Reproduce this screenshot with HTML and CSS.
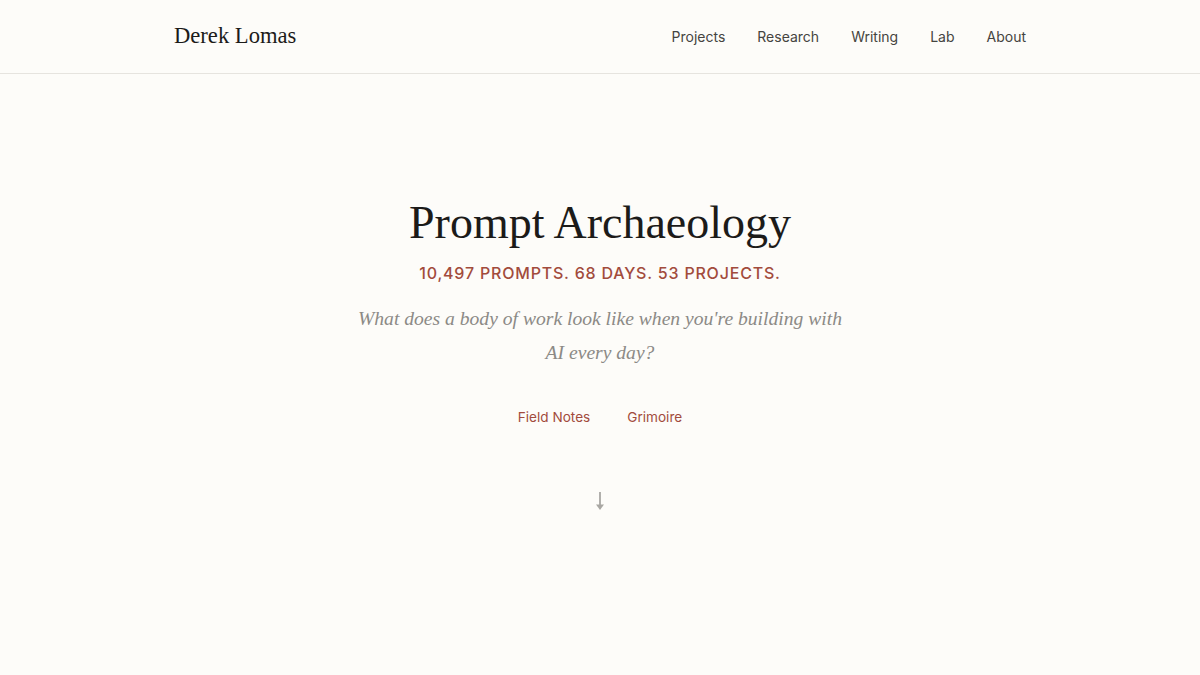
FILE: index.html
```html
<!DOCTYPE html>
<html lang="en">
<head>
<meta charset="utf-8">
<title>Prompt Archaeology — Derek Lomas</title>
<link rel="stylesheet" href="styles.css">
</head>
<body>
<header class="site-header">
  <div class="header-inner">
    <a class="brand" href="#">Derek Lomas</a>
    <nav class="nav">
      <a href="#">Projects</a>
      <a href="#">Research</a>
      <a href="#">Writing</a>
      <a href="#">Lab</a>
      <a href="#">About</a>
    </nav>
  </div>
</header>
<main class="hero">
  <h1 class="title">Prompt Archaeology</h1>
  <p class="stats">10,497 prompts. 68 days. 53 projects.</p>
  <p class="lede">What does a body of work look like when you're building with AI every day?</p>
  <div class="links">
    <a href="#">Field Notes</a>
    <a href="#">Grimoire</a>
  </div>
  <div class="arrow">
    <svg width="12" height="20" viewBox="0 0 12 20" aria-hidden="true">
      <line x1="6" y1="1" x2="6" y2="15" stroke="#a9a7a3" stroke-width="1.8"/>
      <path d="M2 13.5 L6 19 L10 13.5 Z" fill="#a9a7a3"/>
    </svg>
  </div>
</main>
</body>
</html>
```
FILE: styles.css
```css
* { box-sizing: border-box; }
html, body { margin: 0; padding: 0; }
body {
  background: #fdfcf9;
  color: #1c1b19;
  font-family: Inter, "Noto Sans", sans-serif;
  height: 675px;
  overflow: hidden;
}
a { text-decoration: none; color: inherit; }

.site-header {
  height: 74px;
  border-bottom: 1px solid #e6e4df;
}
.header-inner {
  max-width: 900px;
  margin: 0 auto;
  padding: 0 24px;
  height: 73px;
  display: flex;
  align-items: center;
  justify-content: space-between;
}
.brand {
  font-family: "Liberation Serif", "DejaVu Serif", serif;
  font-size: 22.6px;
  color: #1c1b19;
  position: relative;
  top: -1px;
}
.nav {
  display: flex;
  gap: 32px;
}
.nav a {
  font-size: 14px;
  color: #454440;
}

.hero {
  display: flex;
  flex-direction: column;
  align-items: center;
  text-align: center;
  padding-top: 121px;
}
.title {
  margin: 0;
  font-family: "Liberation Serif", "DejaVu Serif", serif;
  font-weight: 400;
  font-size: 46px;
  line-height: 56px;
  color: #1c1b19;
}
.stats {
  margin: 12px 0 0;
  font-size: 16px;
  font-weight: 500;
  letter-spacing: 0.8px;
  text-transform: uppercase;
  color: #a24b3c;
  line-height: 20px;
}
.lede {
  margin: 19px 0 0;
  max-width: 500px;
  font-family: "Liberation Serif", "DejaVu Serif", serif;
  font-style: italic;
  font-size: 19.6px;
  line-height: 34px;
  color: #8c8a86;
}
.links {
  margin-top: 39px;
  display: flex;
  gap: 37px;
}
.links a {
  font-size: 13.6px;
  color: #a24b3c;
}
.arrow {
  margin-top: 66px;
  height: 20px;
}
```
